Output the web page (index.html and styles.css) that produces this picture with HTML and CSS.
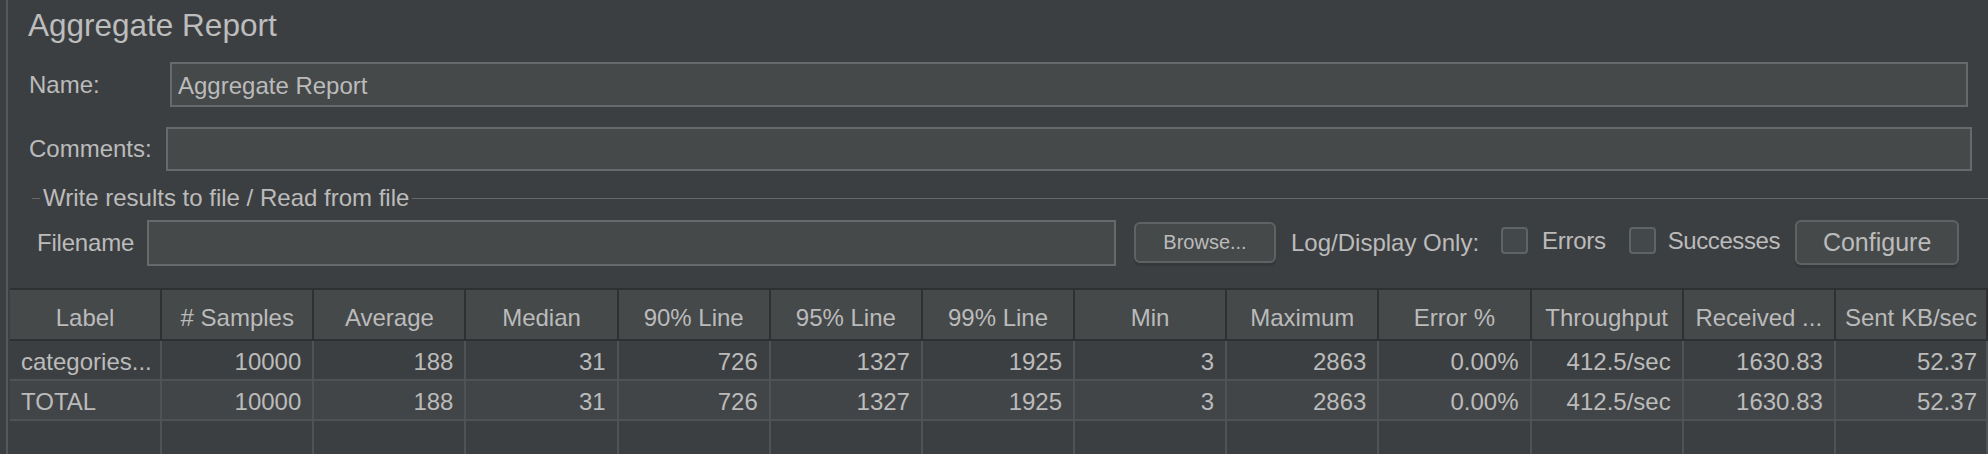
FILE: index.html
```html
<!DOCTYPE html>
<html>
<head>
<meta charset="utf-8">
<title>Aggregate Report</title>
<link rel="stylesheet" href="styles.css">
</head>
<body>
<div class="panel">
  <div class="title">Aggregate Report</div>
  <div class="row name-row">
    <span class="lbl name-lbl">Name:</span>
    <div class="field">Aggregate Report</div>
  </div>
  <div class="row comments-row">
    <span class="lbl comments-lbl">Comments:</span>
    <div class="field"></div>
  </div>
  <div class="legend"><span class="legend-text">Write results to file / Read from file</span></div>
  <div class="row file-row">
    <span class="lbl file-lbl">Filename</span>
    <div class="field file-field"></div>
    <div class="btn btn-browse">Browse...</div>
    <span class="lbl log-lbl">Log/Display Only:</span>
    <span class="cb cb-errors"></span>
    <span class="lbl cb-text errors-text">Errors</span>
    <span class="cb cb-success"></span>
    <span class="lbl cb-text success-text">Successes</span>
    <div class="btn btn-config">Configure</div>
  </div>
  <div class="table">
    <div class="th">Label</div>
    <div class="th"># Samples</div>
    <div class="th">Average</div>
    <div class="th">Median</div>
    <div class="th">90% Line</div>
    <div class="th">95% Line</div>
    <div class="th">99% Line</div>
    <div class="th">Min</div>
    <div class="th">Maximum</div>
    <div class="th">Error %</div>
    <div class="th">Throughput</div>
    <div class="th">Received ...</div>
    <div class="th">Sent KB/sec</div>

    <div class="td first">categories...</div>
    <div class="td">10000</div>
    <div class="td">188</div>
    <div class="td">31</div>
    <div class="td">726</div>
    <div class="td">1327</div>
    <div class="td">1925</div>
    <div class="td">3</div>
    <div class="td">2863</div>
    <div class="td">0.00%</div>
    <div class="td">412.5/sec</div>
    <div class="td">1630.83</div>
    <div class="td last">52.37</div>

    <div class="td first alt">TOTAL</div>
    <div class="td alt">10000</div>
    <div class="td alt">188</div>
    <div class="td alt">31</div>
    <div class="td alt">726</div>
    <div class="td alt">1327</div>
    <div class="td alt">1925</div>
    <div class="td alt">3</div>
    <div class="td alt">2863</div>
    <div class="td alt">0.00%</div>
    <div class="td alt">412.5/sec</div>
    <div class="td alt">1630.83</div>
    <div class="td alt last">52.37</div>

    <div class="td first"></div>
    <div class="td"></div>
    <div class="td"></div>
    <div class="td"></div>
    <div class="td"></div>
    <div class="td"></div>
    <div class="td"></div>
    <div class="td"></div>
    <div class="td"></div>
    <div class="td"></div>
    <div class="td"></div>
    <div class="td"></div>
    <div class="td last"></div>
  </div>
</div>
</body>
</html>
```
FILE: styles.css
```css
html, body {
  margin: 0;
  padding: 0;
}
body {
  background: #3c3f41;
  color: #bbbbbb;
  font-family: "Liberation Sans", Arial, sans-serif;
  font-size: 24px;
  width: 1988px;
  height: 454px;
  overflow: hidden;
}
.panel {
  margin-left: 6px;
  border-left: 2px solid #55585a;
  height: 454px;
  box-sizing: border-box;
  overflow: hidden;
}
.title {
  font-size: 31.5px;
  line-height: 34px;
  height: 34px;
  padding-top: 8px;
  padding-left: 20px;
  color: #bdbdbd;
}
.row {
  display: flex;
  align-items: center;
}
.lbl {
  font-size: 24px;
  white-space: nowrap;
  flex: none;
}
.name-row {
  margin-top: 20px;
  height: 45px;
  padding-left: 21px;
  padding-right: 20px;
}
.name-lbl { width: 141px; }
.comments-row {
  margin-top: 20px;
  height: 44px;
  padding-left: 21px;
  padding-right: 16px;
}
.comments-lbl { width: 137px; }
.field {
  flex: 1;
  height: 100%;
  box-sizing: border-box;
  border: 2px solid #676a6b;
  background: #45494a;
  padding-left: 6px;
  padding-top: 2px;
  font-size: 24px;
  display: flex;
  align-items: center;
}
.legend {
  margin-top: 13px;
  margin-left: 24px;
  height: 28px;
  display: flex;
  align-items: center;
}
.legend::before {
  content: "";
  width: 8px;
  height: 1px;
  background: #65686a;
}
.legend::after {
  content: "";
  flex: 1;
  height: 1px;
  background: #65686a;
}
.legend-text {
  padding: 0 3px;
  line-height: 28px;
  white-space: nowrap;
}
.file-row {
  margin-top: 8px;
  height: 46px;
  padding-left: 29px;
}
.file-lbl { width: 110px; letter-spacing: -0.2px; }
.file-field {
  flex: none;
  width: 969px;
}
.btn {
  flex: none;
  box-sizing: border-box;
  border: 2px solid #5e6263;
  border-radius: 6px;
  background: #45494a;
  box-shadow: 0 3px 0 #353739;
  display: flex;
  align-items: center;
  justify-content: center;
}
.btn-browse {
  margin-left: 18px;
  width: 142px;
  height: 41px;
  font-size: 20px;
  margin-top: -2px;
}
.log-lbl { margin-left: 15px; }
.cb {
  flex: none;
  width: 27px;
  height: 27px;
  box-sizing: border-box;
  border: 2px solid #5f6466;
  border-radius: 4px;
  background: #43494a;
  margin-top: -6px;
}
.cb-errors { margin-left: 22px; }
.cb-success { margin-left: 23px; }
.errors-text { margin-left: 14px; margin-top: -4px; letter-spacing: -0.3px; }
.success-text { margin-left: 12px; margin-top: -4px; letter-spacing: -0.4px; }
.btn-config {
  margin-left: 15px;
  width: 164px;
  height: 45px;
  font-size: 25px;
  margin-top: -2px;
}
.table {
  margin-top: 22px;
  margin-left: 2px;
  display: grid;
  grid-template-columns: repeat(13, 1fr);
  border-top: 2px solid #2e3031;
}
.th {
  height: 51px;
  box-sizing: border-box;
  background: #45494a;
  border-right: 2px solid #2e3031;
  border-bottom: 2px solid #2e3031;
  display: flex;
  align-items: center;
  justify-content: center;
  padding-top: 7px;
  white-space: nowrap;
  overflow: hidden;
}
.td {
  height: 40px;
  box-sizing: border-box;
  border-right: 2px solid #4f5355;
  border-bottom: 2px solid #4f5355;
  display: flex;
  align-items: center;
  justify-content: flex-end;
  padding-right: 11px;
  padding-top: 3px;
  white-space: nowrap;
  overflow: hidden;
}
.td.first {
  justify-content: flex-start;
  padding-left: 11px;
  padding-right: 0;
}
.td.last { padding-right: 9px; }
.td.alt { background: #424547; }
```
